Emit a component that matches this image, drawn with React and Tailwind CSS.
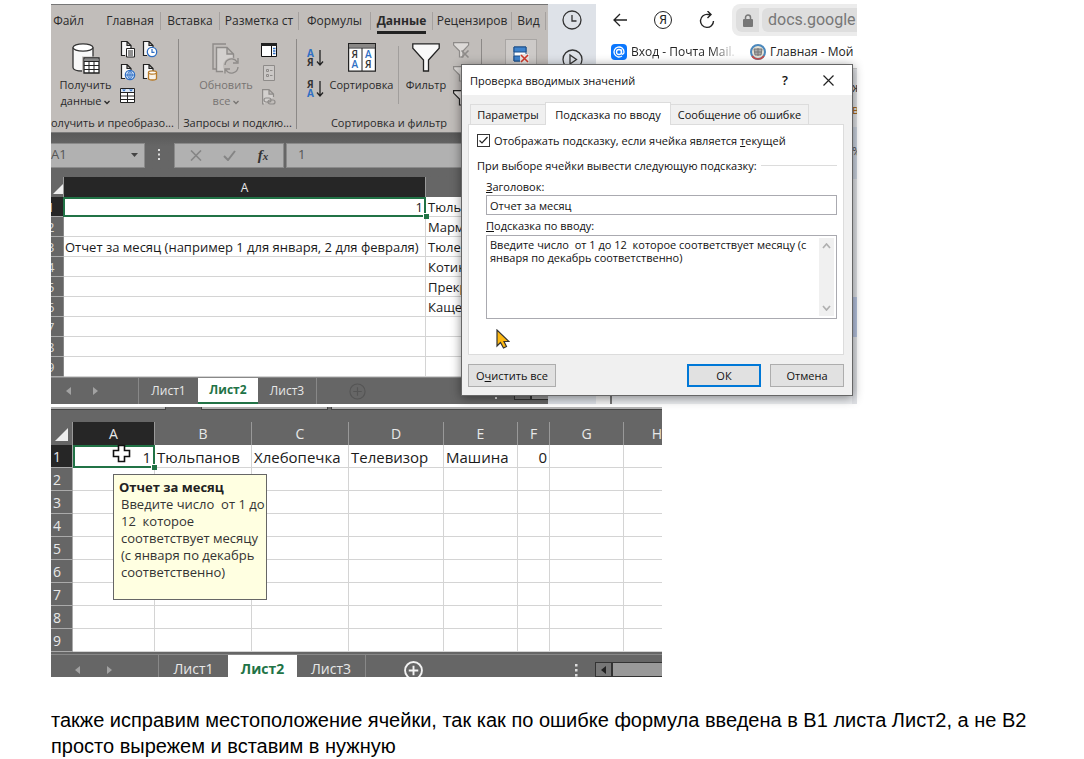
import React from "react";

const UI = "font-['Open_Sans','Noto_Sans',sans-serif]";

function DocLines({ x = 0, y = 0, stroke = "#222" }) {
  return (
    <path
      transform={`translate(${x} ${y})`}
      d="M5 14.500H1.500V.5H7l4 4V7M7 .5v4h4"
      fill="#f7f7f7"
      stroke={stroke}
      strokeWidth="1.200"
    />
  );
}

function TextFileIcon() {
  return (
    <svg width="16" height="17" viewBox="0 0 16 17" aria-hidden="true">
      <DocLines />
      <path d="M6.500 7.500h8v8.500h-8z" fill="#fff" stroke="#222" />
      <path d="M8 10h5M8 12h5M8 14h5" stroke="#222" strokeWidth="1" />
    </svg>
  );
}

function ClockFileIcon() {
  return (
    <svg width="16" height="17" viewBox="0 0 16 17" aria-hidden="true">
      <DocLines />
      <circle cx="10" cy="11" r="4.700" fill="#fff" stroke="#2f6fc4" strokeWidth="1.300" />
      <path d="M10 8v3.300h2.500" fill="none" stroke="#2f6fc4" strokeWidth="1.200" />
    </svg>
  );
}

function GlobeFileIcon() {
  return (
    <svg width="16" height="17" viewBox="0 0 16 17" aria-hidden="true">
      <DocLines />
      <circle cx="10" cy="11" r="4.700" fill="#d9e8fa" stroke="#2f6fc4" strokeWidth="1.200" />
      <path d="M5.500 11h9M10 6.500v9M10 6.500c-3 3-3 6 0 9c3-3 3-6 0-9" fill="none" stroke="#2f6fc4" />
    </svg>
  );
}

function BarrelFileIcon() {
  return (
    <svg width="16" height="17" viewBox="0 0 16 17" aria-hidden="true">
      <DocLines />
      <path d="M6.500 8.500v6c0 1 1.500 1.500 4 1.500s4-.5 4-1.500v-6" fill="#f8f1e6" stroke="#b87a26" strokeWidth="1.300" />
      <ellipse cx="10.500" cy="8.500" rx="4" ry="1.600" fill="#fff" stroke="#b87a26" strokeWidth="1.300" />
    </svg>
  );
}

function SmallTableIcon() {
  return (
    <svg width="16" height="17" viewBox="0 0 16 17" aria-hidden="true">
      <path d="M.5 1.500h14v14H.5z" fill="#fff" stroke="#222" />
      <path d="M1 2h13v3H1z" fill="#dce9f8" />
      <path d="M2 2.500h4L4 4.500zM9 2.500h4L11 4.500z" fill="#2f6fc4" />
      <path d="M.5 5.500h14M.5 9h14M.5 12.500h14M7.500 5.500v10" stroke="#222" />
    </svg>
  );
}

function DatabaseIcon() {
  return (
    <svg width="28" height="31" viewBox="0 0 28 31" aria-hidden="true">
      <path d="M1 4.500v20c0 2 4 3.500 10 3.500h10V4.500" fill="#f8f8f8" stroke="#333" strokeWidth="1.300" />
      <ellipse cx="11" cy="4.500" rx="10" ry="3.700" fill="#fff" stroke="#333" strokeWidth="1.300" />
      <path d="M10 13.500h18V31H10z" fill="#c1bdba" />
      <path d="M12 15h15v15H12z" fill="#fff" stroke="#222" strokeWidth="1.300" />
      <path d="M12.500 15.500h14v2.500h-14z" fill="#8a8a8a" />
      <path d="M12 18.500h15M12 22.500h15M12 26.500h15M17 18v12M22 18v12" stroke="#222" />
    </svg>
  );
}

function RefreshIcon() {
  return (
    <svg width="28" height="31" viewBox="0 0 28 31" fill="none" stroke="#8e8b89" strokeWidth="1.400" aria-hidden="true">
      <path d="M4 26H1V1h13" />
      <path d="M11 28.500H4.500V4.500H15l6.500 6.500v6M15 4.500V11h6.500" fill="#d3d0ce" />
      <circle cx="19.500" cy="23" r="8.500" fill="#c1bdba" stroke="none" />
      <path d="M13 22a6.500 6.500 0 0 1 12-3M26 15v5h-5M26 24a6.500 6.500 0 0 1-12 3M13 30.500v-4.500h5" />
    </svg>
  );
}

function PaneIcon() {
  return (
    <svg width="16" height="14" viewBox="0 0 16 14" aria-hidden="true">
      <path d="M.5.500h15v13H.5z" fill="#fff" stroke="#111" />
      <path d="M0 0h16v3H0z" fill="#222" />
      <path d="M10.500 3v10" stroke="#111" />
      <path d="M12 5.500h2.500M12 8h2.500M12 10.500h2.500" stroke="#2f6fc4" strokeWidth="1.300" />
    </svg>
  );
}

function PropsIcon() {
  return (
    <svg width="12" height="16" viewBox="0 0 12 16" fill="none" stroke="#8e8b89" aria-hidden="true">
      <path d="M.5.500h11v15H.5z" fill="#cbc8c6" />
      <path d="M3.500 4.500h2v2h-2zM3.500 9.500h2v2h-2zM7 5.500h2.500M7 10.500h2.500" />
    </svg>
  );
}

function LinkDocIcon() {
  return (
    <svg width="14" height="16" viewBox="0 0 14 16" fill="none" stroke="#8e8b89" strokeWidth="1.200" aria-hidden="true">
      <path d="M2 15H.6V.6H7l4.500 4.500v3M7 .6v4.500h4.500" fill="#d3d0ce" />
      <rect x="2" y="9" width="7" height="4" rx="2" />
      <rect x="6" y="11" width="7" height="4" rx="2" />
    </svg>
  );
}

function SortOrderIcon({ desc }) {
  return (
    <span className="flex items-center gap-[2px]">
      <span className="flex flex-col text-[10px] leading-[9px] font-bold">
        <span className={desc ? "text-[#333]" : "text-[#2f6fc4]"}>{desc ? "Я" : "А"}</span>
        <span className={desc ? "text-[#2f6fc4]" : "text-[#333]"}>{desc ? "А" : "Я"}</span>
      </span>
      <svg width="8" height="18" viewBox="0 0 8 18" aria-hidden="true">
        <path d="M4 1v15M1 12.500l3 3.500l3-3.500" fill="none" stroke="#222" strokeWidth="1.300" />
      </svg>
    </span>
  );
}

function SortIcon() {
  return (
    <svg width="28" height="29" viewBox="0 0 28 29" aria-hidden="true">
      <path d="M.6.600h26.800v27.500H.6z" fill="#fff" stroke="#222" strokeWidth="1.200" />
      <path d="M1 1h26v3.500H1z" fill="#8a8886" />
      <path d="M0 5h28M14 5v23" stroke="#222" />
      <g className="font-['Open_Sans',sans-serif] text-[10px] font-semibold">
        <text x="3.500" y="15" fill="#333">Я</text>
        <text x="17" y="15" fill="#2f6fc4">А</text>
        <text x="3.500" y="25" fill="#2f6fc4">А</text>
        <text x="17" y="25" fill="#333">Я</text>
      </g>
    </svg>
  );
}

function FunnelIcon() {
  return (
    <svg width="28" height="29" viewBox="0 0 28 29" aria-hidden="true">
      <path d="M.8.800h26.400v4.500L16.500 17v11h-5V17L.8 5.300z" fill="#f9f9f9" stroke="#222" strokeWidth="1.300" />
    </svg>
  );
}

function SmallFunnelIcon({ stroke, cross }) {
  return (
    <svg width="17" height="17" viewBox="0 0 17 17" fill="none" stroke={stroke} strokeWidth="1.200" aria-hidden="true">
      <path d="M.6.600h15v2.500L10 9v6H6.500V9L.6 3.100z" fill="#dddad8" />
      {cross && <path d="M8.500 8.500l7 7M15.500 8.500l-7 7" strokeWidth="1.600" />}
    </svg>
  );
}

function ValidationIcon() {
  return (
    <svg width="16" height="18" viewBox="0 0 16 18" aria-hidden="true">
      <path d="M1 1h12v14H1z" fill="#fff" stroke="#1d4e89" />
      <path d="M1 1h12v5H1zM1 10h12v5H1z" fill="#3f83cc" stroke="#1d4e89" />
      <path d="M7 8h9v9H7z" fill="#e6e3e1" />
      <path d="M8 9l7 7M15 9l-7 7" stroke="#d0392b" strokeWidth="1.600" />
    </svg>
  );
}

function Chevron() {
  return (
    <svg className="ml-[3px] inline-block" width="6" height="5" viewBox="0 0 6 5" aria-hidden="true">
      <path d="M.5 1L3 3.500L5.500 1" fill="none" stroke="currentColor" strokeWidth="1.300" />
    </svg>
  );
}

const ribbonTabs = [
  ["Файл", "w-[49px] pr-[14px]"],
  ["Главная", "w-[61px] border-r"],
  ["Вставка", "w-[59px] border-r"],
  ["Разметка ст", "w-[79px] border-r"],
  ["Формулы", "w-[72px] border-r"],
  ["Данные", "w-[62px] border-r"],
  ["Рецензиров", "w-[79px] border-r"],
  ["Вид", "w-[34px] border-r"],
];

function RibbonTabs() {
  return (
    <nav className="flex h-8 items-center" aria-label="Вкладки ленты">
      {ribbonTabs.map(([label, cls]) => (
        <button
          key={label}
          type="button"
          className={`flex h-[18px] shrink-0 items-center justify-center whitespace-nowrap border-[#a5a19f] ${cls}`}
        >
          {label === "Данные" ? (
            <span className="mt-1 border-b-[3px] border-[#222] pb-px text-[12px] leading-[18px] font-bold">{label}</span>
          ) : (
            label
          )}
        </button>
      ))}
    </nav>
  );
}

function BigButton({ icon, children, className }) {
  return (
    <button type="button" className={`flex shrink-0 flex-col items-center pt-[4px] text-[11px] leading-4 ${className}`}>
      <span className="flex h-[34px] items-start">{icon}</span>
      <span className="whitespace-nowrap text-center">{children}</span>
    </button>
  );
}

function Group({ label, className, labelClass = "", children }) {
  return (
    <section className={`flex h-[90px] shrink-0 flex-col overflow-hidden ${className}`}>
      <div className="flex h-[77px] shrink-0 items-start">{children}</div>
      <div className={`-mt-px flex h-[18px] items-center whitespace-nowrap text-[11px] ${labelClass}`}>{label}</div>
    </section>
  );
}

function Ribbon() {
  return (
    <div className="h-[128px] border-t border-[#777] bg-[#c1bdba] text-[12px] text-[#2a2a2a]">
      <RibbonTabs />
      <div className="flex items-start pt-[2px]">
        <Group label="олучить и преобразо..." className="w-[128px] border-r border-[#8c8987]">
          <BigButton icon={<DatabaseIcon />} className="w-[69px]">
            Получить<br />данные<Chevron />
          </BigButton>
          <div className="grid grid-cols-2 gap-x-[6px] gap-y-[6px] pt-[2px]">
            <TextFileIcon />
            <ClockFileIcon />
            <GlobeFileIcon />
            <BarrelFileIcon />
            <SmallTableIcon />
          </div>
        </Group>
        <Group label="Запросы и подклю..." className="w-[118px] border-r border-[#8c8987]" labelClass="justify-center">
          <BigButton icon={<RefreshIcon />} className="ml-[12px] w-[70px] text-[#777472]">
            Обновить<br />все<Chevron />
          </BigButton>
          <div className="flex w-4 flex-col items-center gap-[8px] pt-[4px]">
            <PaneIcon />
            <PropsIcon />
            <LinkDocIcon />
          </div>
        </Group>
        <Group label="Сортировка и фильтр" className="w-[185px] border-r border-[#8c8987]" labelClass="justify-center">
          <div className="ml-[10px] flex w-[18px] flex-col gap-[13px] pt-[10px]">
            <SortOrderIcon />
            <SortOrderIcon desc />
          </div>
          <BigButton icon={<SortIcon />} className="w-[73px]">Сортировка</BigButton>
          <div className="mt-[7px] h-[58px] border-l border-[#a19e9c]" />
          <BigButton icon={<FunnelIcon />} className="w-[54px]">Фильтр</BigButton>
          <div className="flex flex-col gap-[7px] pt-[3px]">
            <SmallFunnelIcon stroke="#8e8b89" cross />
            <SmallFunnelIcon stroke="#8e8b89" />
            <SmallFunnelIcon stroke="#222" />
          </div>
        </Group>
        <button type="button" aria-label="Проверка данных" className="ml-[23px] flex h-[60px] w-8 justify-center border border-[#a9a6a4] bg-[#cdcac8] pt-[6px]">
          <ValidationIcon />
        </button>
      </div>
    </div>
  );
}

function FormulaBar() {
  const box = "flex h-[25px] shrink-0 items-center border border-[#8a8a8a] bg-[#b1b1b1]";
  return (
    <div className="flex h-[45px] items-center border-t border-[#7b7b7b] bg-linear-to-b from-[#595959] to-[#666] to-30% text-[13px] text-[#555]">
      <div className={`${box} w-[94px] justify-between border-l-0 pr-[6px]`}>
        <span>A1</span>
        <svg width="7" height="4" viewBox="0 0 7 4" aria-hidden="true"><path d="M0 0h7L3.500 4z" fill="#444" /></svg>
      </div>
      <svg className="mx-[13px] shrink-0" width="3" height="12" viewBox="0 0 3 12" fill="#ddd" aria-hidden="true">
        <path d="M0 0h2v2H0zM0 4.500h2v2H0zM0 9h2v2H0z" />
      </svg>
      <div className={`${box} w-[110px] justify-around px-1`}>
        <button type="button" aria-label="Отмена ввода">
          <svg width="12" height="11" viewBox="0 0 12 11"><path d="M1 .5l10 10M11 .5l-10 10" stroke="#858585" strokeWidth="1.600" /></svg>
        </button>
        <button type="button" aria-label="Ввод">
          <svg width="13" height="11" viewBox="0 0 13 11"><path d="M1 6l4 4L12 1" fill="none" stroke="#858585" strokeWidth="2" /></svg>
        </button>
        <button type="button" className="font-['Liberation_Serif',serif] text-[15px] font-bold italic text-[#333]">
          f<span className="text-[11px]">x</span>
        </button>
      </div>
      <div className={`${box} ml-[2px] grow pl-[11px]`}>1</div>
    </div>
  );
}

function Corner({ size }) {
  return (
    <svg className="ml-auto" width={size} height={size} viewBox="0 0 10 10" aria-hidden="true">
      <path d="M10 0v10H0z" fill="#eee" />
    </svg>
  );
}

function Selection({ value }) {
  return (
    <div className="relative">
      {value}
      <svg className="absolute -right-[6px] -bottom-[4px]" width="6" height="6" viewBox="0 0 6 6" aria-hidden="true">
        <path d="M0 0h6v6H0z" fill="#fff" />
        <path d="M1 1h5v5H1z" fill="#217346" />
      </svg>
    </div>
  );
}

const names = ["Тюльп", "Марм", "Тюле", "Котик", "Прекр", "Каще"];

function UpperSheet() {
  return (
    <table className="w-full table-fixed border-separate border-spacing-0 text-[13px] leading-[17px] text-[#1a1a1a]">
      <colgroup>
        <col className="w-[12px]" />
        <col className="w-[363px]" />
        <col />
      </colgroup>
      <thead>
        <tr className="h-5 bg-[#666]">
          <th className="p-0 pb-[3px] align-bottom"><Corner size={10} /></th>
          <th className="border-r border-l border-[#999] bg-[#262626] p-0 text-[12px] font-normal text-[#e8e8e8]">A</th>
          <th className="p-0" />
        </tr>
      </thead>
      <tbody>
        {[1, 2, 3, 4, 5, 6, 7, 8, 9].map((n) => (
          <tr key={n} className="h-5">
            <th className={`overflow-hidden border-b border-[#aaa] p-0 pt-[2px] font-normal text-[#d8d8d8] ${n === 1 ? "bg-[#262626]" : "bg-[#666]"}`}>
              <span className="-ml-1 block text-left">{n}</span>
            </th>
            {n === 1 ? (
              <td className="border-2 border-[#217346] bg-white p-0 pt-px pr-px text-right leading-[15px]"><Selection value="1" /></td>
            ) : (
              <td className="overflow-hidden border-r border-b border-l border-[#d4d4d4] border-l-[#888] bg-white p-0 pt-[2px] pl-px whitespace-nowrap">
                {n === 3 ? "Отчет за месяц (например 1 для января, 2 для февраля)" : ""}
              </td>
            )}
            <td className="overflow-hidden border-b border-[#d4d4d4] bg-white p-0 pt-[2px] pl-[2px] whitespace-nowrap">{names[n - 1]}</td>
          </tr>
        ))}
      </tbody>
    </table>
  );
}

function NavArrows({ className }) {
  return (
    <div className={`flex shrink-0 items-center border-r border-[#888] ${className}`}>
      <button type="button" aria-label="Предыдущий лист">
        <svg width="5" height="8" viewBox="0 0 5 8"><path d="M5 0v8L0 4z" fill="#a2a2a2" /></svg>
      </button>
      <button type="button" aria-label="Следующий лист">
        <svg width="5" height="8" viewBox="0 0 5 8"><path d="M0 0v8l5-4z" fill="#a2a2a2" /></svg>
      </button>
    </div>
  );
}

function PlusCircle({ size, color, width }) {
  return (
    <svg width={size} height={size} viewBox="0 0 18 18" fill="none" stroke={color} strokeWidth={width} aria-hidden="true">
      <circle cx="9" cy="9" r="8" />
      <path d="M9 4.500v9M4.500 9h9" />
    </svg>
  );
}

function ScrollStart({ className }) {
  return (
    <div className={`flex ${className}`}>
      <div className="flex w-[17px] items-center justify-center border border-[#333] bg-[#777]">
        <svg width="5" height="8" viewBox="0 0 5 8" aria-hidden="true"><path d="M5 0v8L0 4z" fill="#222" /></svg>
      </div>
      <div className="grow border border-r-0 border-[#333] bg-[#999]" />
    </div>
  );
}

function Clock() {
  return (
    <svg width="20" height="20" viewBox="0 0 20 20" fill="none" stroke="#333" strokeWidth="1.300" aria-hidden="true">
      <circle cx="10" cy="10" r="9" /><path d="M10 5v6h4.500" />
    </svg>
  );
}

function Play() {
  return (
    <svg width="21" height="21" viewBox="0 0 21 21" fill="none" stroke="#333" strokeWidth="1.300" aria-hidden="true">
      <circle cx="10.500" cy="10.500" r="9.500" /><path d="M8 6v9l6.500-4.500z" />
    </svg>
  );
}

function Browser() {
  return (
    <div className="flex min-w-0 grow bg-white font-[Roboto,sans-serif] text-[#222]">
      <aside className="flex w-12 shrink-0 flex-col items-center gap-[19px] bg-[#dee2e8] pt-[6px]">
        <Clock />
        <Play />
      </aside>
      <div className="flex min-w-0 grow flex-col overflow-hidden">
        <div className="flex h-8 shrink-0 items-center pl-[17px]">
          <button type="button" aria-label="Назад">
            <svg width="14" height="14" viewBox="0 0 14 14" fill="none" stroke="#222" strokeWidth="1.300"><path d="M14 7H1M7 1L1 7l6 6" /></svg>
          </button>
          <button type="button" aria-label="Яндекс" className="ml-[27px] flex size-[18px] items-center justify-center rounded-full border border-[#222] text-[12px] leading-none">
            Я
          </button>
          <button type="button" aria-label="Обновить" className="ml-[27px]">
            <svg width="16" height="18" viewBox="0 0 16 18" fill="none" stroke="#222" strokeWidth="1.400">
              <path d="M14.500 10A6.500 6.500 0 1 1 9 3.500h3M8.500 0l3.500 3.500L8.500 7" />
            </svg>
          </button>
          <div className="ml-[17px] flex h-8 min-w-0 grow items-center gap-[3px] rounded-l-lg bg-[#ececec] pl-[4px]">
            <span className="flex h-6 w-[23px] shrink-0 items-center justify-center rounded-l-md bg-[#dedede]">
              <svg width="10" height="13" viewBox="0 0 10 13" aria-hidden="true">
                <path d="M2.500 6V3.500a2.500 2.500 0 0 1 5 0V6" fill="none" stroke="#777" strokeWidth="1.500" />
                <rect y="5" width="10" height="8" rx="1" fill="#777" />
              </svg>
            </span>
            <span className="flex h-6 min-w-0 grow items-center rounded-l-md bg-[#dedede] pl-[6px] text-[16px] text-[#777]">docs.google</span>
          </div>
        </div>
        <div className={`flex h-8 shrink-0 items-center pl-[15px] text-[12px] whitespace-nowrap ${UI}`}>
          <svg className="shrink-0" width="16" height="16" viewBox="0 0 16 16" fill="none" stroke="#fff" strokeWidth="1.300" aria-hidden="true">
            <rect width="16" height="16" rx="4" fill="#0a77ff" stroke="none" />
            <circle cx="8" cy="8" r="2.500" />
            <path d="M10.500 5.500V9c0 2 2.500 1.500 2.500-1a5 5 0 1 0-2 4" />
          </svg>
          <a href="#mail" className="ml-1 w-[107px] overflow-hidden bg-linear-to-r from-[#222] from-75% to-transparent bg-clip-text text-transparent">Вход - Почта Mail.</a>
          <svg className="ml-3 shrink-0" width="16" height="16" viewBox="0 0 16 16" aria-hidden="true">
            <circle cx="8" cy="8" r="7" fill="#e7e2d5" stroke="#4b88bd" strokeWidth="2" />
            <path d="M2 12c3 4 9 4 12 0" fill="none" stroke="#cd4b45" strokeWidth="1.500" />
            <path d="M4 5h8l-1 6H5zM8 4v8M5 8h6" fill="#aaa" stroke="#777" />
          </svg>
          <a href="#home" className="ml-1">Главная - Мой</a>
        </div>
        <div className="flex min-h-0 grow items-stretch justify-between border-t border-[#ccc] bg-[#eceef1]">
          <div className="w-4 border-r-2 border-[#777] bg-[#f3f3f3]" />
          <div className="flex w-[5px] flex-col overflow-hidden bg-[#e0e2e6] text-[12px]">
            <span className="pt-[10px] text-[#444]">ж</span>
            <span className="pt-1 text-[#a86b22]">в</span>
            <span className="mt-2 h-[52px] bg-[#cbd3df] pt-4 text-[#555]">%</span>
            <span className="mt-[118px] h-10 bg-[#b5c2dd]" />
          </div>
        </div>
      </div>
    </div>
  );
}

function Dialog() {
  const tab = "flex items-center justify-center border border-[#dcdcdc] whitespace-nowrap";
  const push = "flex h-[23px] items-center justify-center bg-[#e1e1e1]";
  return (
    <div
      role="dialog"
      aria-label="Проверка вводимых значений"
      className="absolute top-[60px] left-[410px] w-[392px] border border-[#666] bg-[#f0f0f0] text-[11px] leading-[13px] text-[#111] shadow-[0_2px_10px_rgba(0,0,0,0.45)]"
    >
      <header className="flex h-[30px] items-center bg-white pl-2">
        <h2 className="grow text-[11px]">Проверка вводимых значений</h2>
        <button type="button" className="w-5 text-[13px] font-semibold">?</button>
        <button type="button" aria-label="Закрыть" className="mr-[18px] ml-[28px]">
          <svg width="11" height="11" viewBox="0 0 11 11" stroke="#222" strokeWidth="1.200"><path d="M.5.500l10 10M10.500.500l-10 10" /></svg>
        </button>
      </header>
      <div className="px-[6px] pt-[6px] pb-[8px]">
        <div className="flex h-[23px] items-end pl-[2px]" role="tablist">
          <button type="button" role="tab" className={`${tab} h-5 w-[75px] border-r-0 border-b-0`}>Параметры</button>
          <button type="button" role="tab" aria-selected="true" className={`${tab} z-10 -mb-px h-[23px] w-[126px] border-b-0 bg-white`}>Подсказка по вводу</button>
          <button type="button" role="tab" className={`${tab} h-5 w-[138px] border-b-0 border-l-0`}>Сообщение об ошибке</button>
        </div>
        <div className="h-[231px] w-[376px] border border-[#dcdcdc] bg-white pt-[8px] pr-[6px] pl-2">
          <label className="flex h-[14px] items-center gap-[4px]">
            <span className="grid size-[13px]">
              <input type="checkbox" defaultChecked className="peer col-start-1 row-start-1 size-[13px] appearance-none border border-[#333] bg-white" />
              <svg className="pointer-events-none col-start-1 row-start-1" width="13" height="13" viewBox="0 0 13 13" aria-hidden="true"><path d="M2.500 6.500L5 9l5.500-6" fill="none" stroke="#222" strokeWidth="1.200" /></svg>
            </span>
            <span>Отображать подсказку, если ячейка является <u>т</u>екущей</span>
          </label>
          <div className="mt-3 flex items-center gap-1">
            <span className="whitespace-nowrap">При выборе ячейки вывести следующую подсказку:</span>
            <span className="grow border-t border-[#dcdcdc]" />
          </div>
          <div className="flex flex-col pt-[8px] pl-[9px]">
            <label htmlFor="hint-title"><u>З</u>аголовок:</label>
            <input id="hint-title" defaultValue="Отчет за месяц" className="mt-[2px] h-5 w-full border border-[#aaaab0] bg-white px-[3px] outline-none" />
            <label htmlFor="hint-text" className="mt-[4px]"><u>П</u>одсказка по вводу:</label>
            <div className="mt-[3px] flex h-[84px] border border-[#aaaab0] p-[2px]">
              <textarea
                id="hint-text"
                defaultValue={"Введите число  от 1 до 12  которое соответствует месяцу (с января по декабрь соответственно)"}
                className="h-full min-w-0 grow resize-none overflow-hidden pl-px text-[11px] leading-[13px] outline-none"
              />
              <div className="flex w-[15px] flex-col items-center justify-between bg-[#f0f0f0] py-[5px]">
                <svg width="9" height="6" viewBox="0 0 9 6" aria-hidden="true"><path d="M1 5l3.500-4L8 5" fill="none" stroke="#b0b0b0" strokeWidth="1.700" /></svg>
                <svg width="9" height="6" viewBox="0 0 9 6" aria-hidden="true"><path d="M1 1l3.500 4L8 1" fill="none" stroke="#b0b0b0" strokeWidth="1.700" /></svg>
              </div>
            </div>
          </div>
        </div>
        <div className="mt-[9px] flex">
          <button type="button" className={`${push} w-[88px] border border-[#adadad]`}>О<u>ч</u>истить все</button>
          <button type="button" className={`${push} ml-auto w-[74px] border-2 border-[#0078d7]`}>ОК</button>
          <button type="button" className={`${push} mr-[2px] ml-[9px] w-[74px] border border-[#adadad]`}>Отмена</button>
        </div>
      </div>
      <svg className="absolute top-[264px] left-[34px]" width="14" height="21" viewBox="0 0 14 21" aria-hidden="true">
        <path d="M1 1v16l3.500-3.500L7.500 19l3-1.500L8 12.500h5z" fill="#fdb813" stroke="#333" strokeWidth="1.200" />
      </svg>
    </div>
  );
}

function UpperCapture() {
  return (
    <section className={`relative flex h-[400px] w-full max-w-[806px] ${UI}`}>
      <div className="flex w-[497px] shrink-0 flex-col overflow-hidden bg-[#666]">
        <Ribbon />
        <FormulaBar />
        <UpperSheet />
        <div className="flex h-[27px] border-t border-[#888] text-[12px] text-[#e8e8e8]">
          <NavArrows className="w-[88px] gap-[22px] pl-[15px]" />
          <button type="button" className="w-[59px]">Лист1</button>
          <button type="button" className="w-[60px] border-b-2 border-[#217346] bg-white text-[12px] font-bold text-[#217346]">Лист2</button>
          <button type="button" className="w-[59px] border-r border-[#888]">Лист3</button>
          <button type="button" aria-label="Новый лист" className="ml-[32px]"><PlusCircle size={17} color="#555" width={1.2} /></button>
          <svg className="mt-[10px] ml-auto" width="3" height="12" viewBox="0 0 3 12" fill="#ddd" aria-hidden="true">
            <path d="M0 0h2v2H0zM0 4.500h2v2H0zM0 9h2v2H0z" />
          </svg>
          <ScrollStart className="mt-[6px] mb-[4px] ml-[16px] w-[34px]" />
        </div>
      </div>
      <Browser />
      <Dialog />
    </section>
  );
}

const columns = [
  ["A", "1", "w-[82px]"],
  ["B", "Тюльпанов", "w-[97px]"],
  ["C", "Хлебопечка", "w-[97px]"],
  ["D", "Телевизор", "w-[95px]"],
  ["E", "Машина", "w-[74px]"],
  ["F", "0", "w-[32px]"],
  ["G", "", "w-[74px]"],
  ["H", "", ""],
];

function LowerSheet() {
  return (
    <table className="w-full table-fixed border-separate border-spacing-0 text-[15px] leading-[20px] text-[#1a1a1a]">
      <colgroup>
        <col className="w-[22px]" />
        {columns.map(([name, , width]) => <col key={name} className={width} />)}
      </colgroup>
      <thead>
        <tr className="h-[23px] bg-[#666] text-[14px] text-[#e8e8e8]">
          <th className="border-r border-[#999] p-0 pr-1 pb-1 align-bottom"><Corner size={13} /></th>
          {columns.map(([name]) => (
            <th
              key={name}
              className={`border-r border-[#999] p-0 font-normal ${name === "A" ? "bg-[#262626]" : ""} ${name === "H" ? "border-r-0 pr-0 text-right" : "text-center"}`}
            >
              {name}
            </th>
          ))}
        </tr>
      </thead>
      <tbody>
        {[1, 2, 3, 4, 5, 6, 7, 8, 9].map((n) => (
          <tr key={n} className="h-[23px]">
            <th className={`border-r border-b border-[#aaa] p-0 pt-[2px] pl-[2px] text-left text-[14px] font-normal text-[#e8e8e8] ${n === 1 ? "bg-[#262626]" : "bg-[#666]"}`}>{n}</th>
            {columns.map(([name, value]) =>
              n === 1 && name === "A" ? (
                <td key={name} className="border-2 border-[#217346] bg-white p-0 pt-px pr-[2px] text-right leading-[18px]"><Selection value={value} /></td>
              ) : (
                <td
                  key={name}
                  className={`border-b border-[#d4d4d4] bg-white p-0 px-[2px] pt-[2px] whitespace-nowrap ${name === "H" ? "" : "border-r"} ${name === "F" ? "text-right" : ""}`}
                >
                  {n === 1 ? value : ""}
                </td>
              )
            )}
          </tr>
        ))}
      </tbody>
    </table>
  );
}

function LowerCapture() {
  return (
    <section className={`relative mt-[3px] flex h-[270px] w-full max-w-[611px] flex-col overflow-hidden bg-[#666] ${UI}`}>
      <div className="flex h-[15px] shrink-0 items-start">
        <div className="h-[3px] w-[115px] border-r border-b border-[#444] bg-[#b1b1b1]" />
        <div className="ml-[35px] h-[3px] w-[127px] border border-t-0 border-[#444] bg-[#b1b1b1]" />
        <div className="ml-[3px] h-[3px] grow border-b border-l border-[#444] bg-[#b1b1b1]" />
      </div>
      <LowerSheet />
      <div className="mt-[2px] flex min-h-0 grow items-stretch border-t border-[#888] text-[14px] text-[#e8e8e8]">
        <NavArrows className="w-[108px] gap-[27px] pt-[7px] pl-[24px]" />
        <button type="button" className="w-[69px] pt-[6px] leading-[16px]">Лист1</button>
        <button type="button" className="w-[69px] bg-white pt-[6px] leading-[16px] font-bold text-[#217346]">Лист2</button>
        <button type="button" className="w-[69px] border-r border-[#888] pt-[6px] leading-[16px]">Лист3</button>
        <button type="button" aria-label="Новый лист" className="ml-[38px] pt-[6px]"><PlusCircle size={19} color="#f2f2f2" width={1.8} /></button>
        <svg className="mt-[9px] ml-auto" width="3" height="13" viewBox="0 0 3 13" fill="#ddd" aria-hidden="true">
          <path d="M0 0h2.500v2.500H0zM0 5h2.500v2.500H0zM0 10h2.500v2.500H0z" />
        </svg>
        <ScrollStart className="mt-[7px] ml-[17px] w-[67px]" />
      </div>
      <div role="tooltip" className="absolute top-[67px] left-[62px] h-[126px] w-[154px] border border-[#666] bg-[#ffffe1] pt-[4px] pl-[5px] text-[13px] text-[#333]">
        <p className="leading-[17px] font-bold text-[#222]">Отчет за месяц</p>
        <p className="pl-[2px] leading-[17px] whitespace-pre">{"Введите число  от 1 до\n12  которое\nсоответствует месяцу\n(с января по декабрь\nсоответственно)"}</p>
      </div>
      <svg className="absolute top-[37px] left-[61px]" width="19" height="19" viewBox="0 0 19 19" aria-hidden="true">
        <path d="M6.500 1.500h6v5h5v6h-5v5h-6v-5h-5v-6h5z" fill="#fff" stroke="#111" strokeWidth="1.600" />
      </svg>
    </section>
  );
}

export default function App() {
  return (
    <main className="min-w-0 bg-white pt-1 pr-[40px] pl-[51px]">
      <UpperCapture />
      <LowerCapture />
      <p className="mt-[30px] font-['Liberation_Sans',Arial,sans-serif] text-[20px] leading-[26px] text-black">
        также исправим местоположение ячейки, так как по ошибке формула введена в В1 листа Лист2, а не В2
        <br />
        просто вырежем и вставим в нужную
      </p>
    </main>
  );
}
